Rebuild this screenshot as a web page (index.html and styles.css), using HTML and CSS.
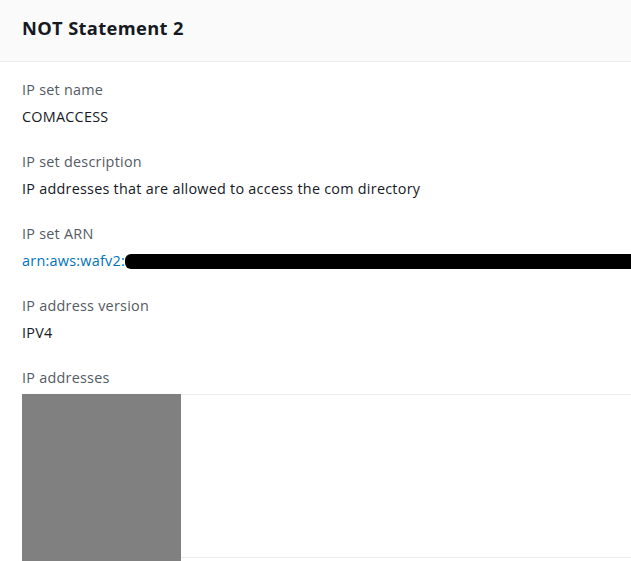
FILE: index.html
```html
<!DOCTYPE html>
<html>
<head>
<meta charset="utf-8">
<link rel="stylesheet" href="styles.css">
</head>
<body>
<div class="panel">
  <div class="header"><h2 class="title">NOT Statement 2</h2></div>
  <div class="content">
    <div class="field">
      <div class="label">IP set name</div>
      <div class="value">COMACCESS</div>
    </div>
    <div class="field">
      <div class="label">IP set description</div>
      <div class="value">IP addresses that are allowed to access the com directory</div>
    </div>
    <div class="field">
      <div class="label">IP set ARN</div>
      <div class="value arn"><a class="link" href="#">arn:aws:wafv2:</a><span class="redact"></span></div>
    </div>
    <div class="field">
      <div class="label">IP address version</div>
      <div class="value">IPV4</div>
    </div>
    <div class="field">
      <div class="label">IP addresses</div>
      <div class="addr-table">
        <div class="addr-block"></div>
        <div class="addr-rest"></div>
      </div>
    </div>
  </div>
</div>
</body>
</html>
```

FILE: styles.css
```css
html, body {
  margin: 0;
  padding: 0;
  background: #ffffff;
  overflow: hidden;
}
body {
  font-family: "Open Sans", sans-serif;
  font-size: 14.4px;
  letter-spacing: 0.25px;
  color: #16191f;
  width: 631px;
  height: 561px;
}
.header {
  background: #fafafa;
  height: 61px;
  border-bottom: 1px solid #eaeded;
  display: flex;
  align-items: center;
  padding: 0 22px;
  box-sizing: content-box;
}
.title {
  margin: 0;
  font-size: 18.3px;
  letter-spacing: 0.35px;
  font-weight: 700;
  line-height: 24px;
  padding-bottom: 5px;
}
.content {
  padding: 17px 0 0 22px;
  display: flex;
  flex-direction: column;
  gap: 23px;
}
.field {
  display: flex;
  flex-direction: column;
  gap: 5px;
}
.label {
  color: #545b64;
  line-height: 22px;
}
.value {
  line-height: 22px;
}
.arn {
  display: flex;
  align-items: center;
}
.link {
  color: #0073bb;
  text-decoration: none;
}
.redact {
  flex: 1;
  height: 15px;
  background: #000;
  border-radius: 6px 0 0 6px;
  margin-top: 1px;
}
.addr-table {
  display: flex;
  height: 170px;
}
.addr-block {
  width: 159px;
  background: #808080;
}
.addr-rest {
  flex: 1;
  border-top: 1px solid #eaeded;
  border-bottom: 1px solid #eaeded;
  height: 162px;
}
```
